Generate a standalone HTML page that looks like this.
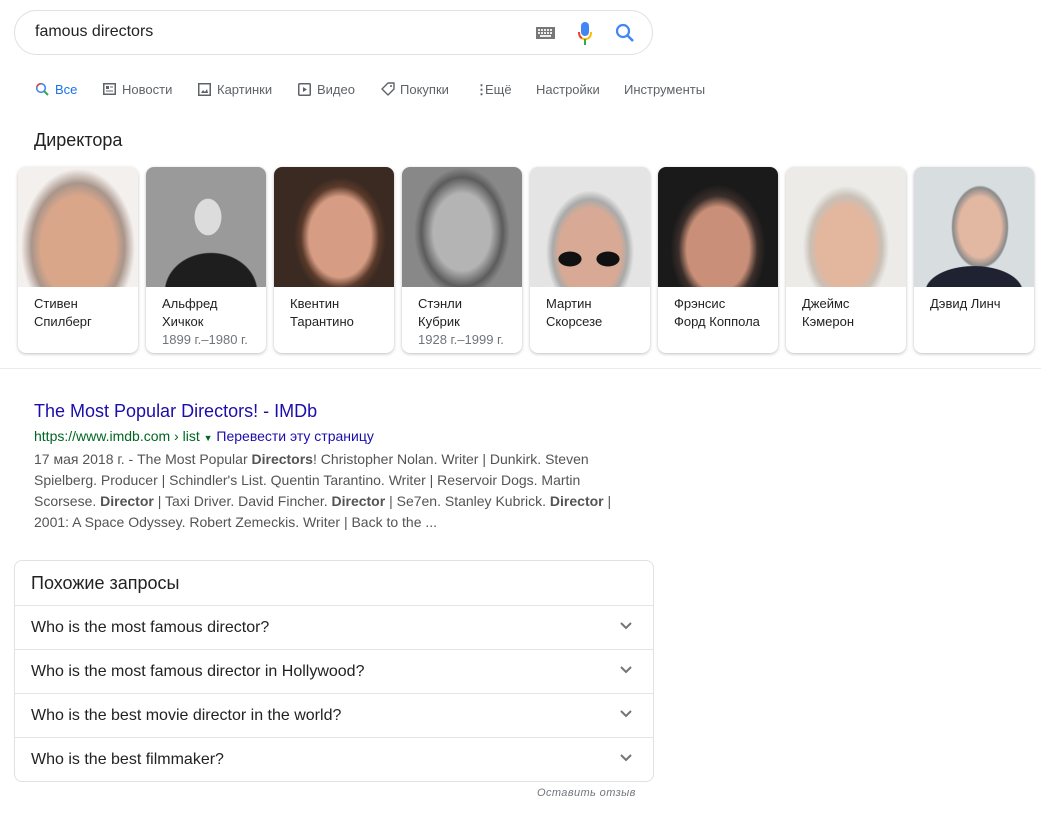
<!DOCTYPE html>
<html><head><meta charset="utf-8"><style>
*{margin:0;padding:0;box-sizing:border-box}
body{width:1041px;height:818px;background:#fff;font-family:"Liberation Sans",Arial,sans-serif;position:relative;overflow:hidden}
.a{position:absolute;white-space:nowrap}
.search{left:14px;top:10px;width:639px;height:45px;border:1px solid #dfe1e5;border-radius:24px}
.tab{top:82px;font-size:13px;color:#5f6368;line-height:15px}
.card{position:absolute;top:167px;width:120px;height:186px;border-radius:8px;box-shadow:0 1px 3px rgba(0,0,0,.25);overflow:hidden;background:#fff}
.ph{height:120px;position:relative;overflow:hidden}
.nm{position:absolute;left:16px;top:128px;font-size:13px;line-height:18px;color:#222}
.nm span{color:#70757a}
.snip{left:34px;top:449px;font-size:14px;line-height:21px;color:#545454;white-space:normal;width:590px}
.rel{left:14px;top:560px;width:640px;height:222px;border:1px solid #dfe1e5;border-radius:8px}
.row{position:absolute;left:0;width:638px;height:44px;border-top:1px solid #e4e4e4;font-size:16px;color:#222;padding-left:16px;line-height:43px}
.row svg{position:absolute;right:20px;top:15px}
</style></head><body>
<div class="a search"></div>
<div class="a" style="left:35px;top:23px;font-size:16px;color:#222">famous directors</div>
<svg class="a" style="left:536px;top:27px" width="19" height="12"><rect width="19" height="12" fill="#777"/><g fill="#eee"><rect x="2" y="2" width="2" height="2"/><rect x="5" y="2" width="2" height="2"/><rect x="8" y="2" width="2" height="2"/><rect x="11" y="2" width="2" height="2"/><rect x="14" y="2" width="2" height="2"/><rect x="2" y="5" width="2" height="2"/><rect x="5" y="5" width="2" height="2"/><rect x="8" y="5" width="2" height="2"/><rect x="11" y="5" width="2" height="2"/><rect x="14" y="5" width="2" height="2"/><rect x="4" y="8" width="11" height="2"/></g></svg>
<svg class="a" style="left:577px;top:22px" width="16" height="24"><rect x="4" y="0" width="8" height="14" rx="4" fill="#4285f4"/><path d="M2 10 Q2 17 8 17 Q14 17 14 10" stroke="#fbbc05" stroke-width="2" fill="none"/><path d="M8 17 L8 23" stroke="#34a853" stroke-width="2"/><path d="M2 10 Q2 15 5 16" stroke="#ea4335" stroke-width="2" fill="none"/></svg>
<svg class="a" style="left:615px;top:23px" width="20" height="20"><circle cx="8" cy="8" r="6" stroke="#4285f4" stroke-width="2.2" fill="none"/><path d="M12.5 12.5 L18 18" stroke="#4285f4" stroke-width="2.6"/></svg>

<svg class="a" style="left:35px;top:82px" width="14" height="14"><circle cx="6" cy="6" r="4.3" stroke="#4285f4" stroke-width="1.6" fill="none"/><path d="M9 9 L13 13" stroke="#34a853" stroke-width="2"/><path d="M2 5 A4.3 4.3 0 0 1 6 1.7" stroke="#ea4335" stroke-width="1.6" fill="none"/></svg>
<div class="a tab" style="left:55px;color:#1a73e8">Все</div>
<svg class="a" style="left:103px;top:83px" width="13" height="12"><rect x=".75" y=".75" width="11.5" height="10.5" fill="none" stroke="#5f6368" stroke-width="1.5"/><rect x="3" y="3" width="3" height="3" fill="#5f6368"/><path d="M7 4h3M3 8h7" stroke="#5f6368"/></svg>
<div class="a tab" style="left:122px">Новости</div>
<svg class="a" style="left:198px;top:83px" width="13" height="13"><rect x=".75" y=".75" width="11.5" height="11.5" fill="none" stroke="#5f6368" stroke-width="1.5"/><path d="M3 10 L5 7 L7 9 L9 6 L10 10Z" fill="#5f6368"/></svg>
<div class="a tab" style="left:217px">Картинки</div>
<svg class="a" style="left:298px;top:83px" width="13" height="13"><rect x=".75" y=".75" width="11.5" height="11.5" rx="1" fill="none" stroke="#5f6368" stroke-width="1.5"/><path d="M5 4 L9 6.5 L5 9Z" fill="#5f6368"/></svg>
<div class="a tab" style="left:317px">Видео</div>
<svg class="a" style="left:381px;top:82px" width="14" height="14"><path d="M1 7 L7 1 L13 1 L13 7 L7 13Z" fill="none" stroke="#5f6368" stroke-width="1.4" stroke-linejoin="round"/><circle cx="10" cy="4" r="1" fill="#5f6368"/></svg>
<div class="a tab" style="left:400px">Покупки</div>
<div class="a tab" style="left:475px;font-weight:bold">⋮</div>
<div class="a tab" style="left:485px">Ещё</div>
<div class="a tab" style="left:536px">Настройки</div>
<div class="a tab" style="left:624px">Инструменты</div>

<div class="a" style="left:34px;top:130px;font-size:18px;color:#222">Директора</div>

<div class="card" style="left:18px"><div class="ph" style="background:radial-gradient(ellipse 62px 85px at 60px 80px,#d9a68a 0 60%,#a9958a 75%,#f4f0ee 92%)"></div><div class="nm">Стивен<br>Спилберг</div></div>
<div class="card" style="left:146px"><div class="ph" style="background:radial-gradient(ellipse 22px 30px at 62px 50px,#dcdcdc 60%,transparent 62%),radial-gradient(ellipse 65px 55px at 65px 125px,#1e1e1e 70%,transparent 72%),#9a9a9a"></div><div class="nm">Альфред<br>Хичкок<br><span>1899 г.–1980 г.</span></div></div>
<div class="card" style="left:274px"><div class="ph" style="background:radial-gradient(ellipse 50px 65px at 66px 70px,#d79c84 62%,#5a3a2a 78%,#3a2a22 92%)"></div><div class="nm">Квентин<br>Тарантино</div></div>
<div class="card" style="left:402px"><div class="ph" style="background:radial-gradient(ellipse 52px 70px at 60px 65px,#b4b4b4 55%,#5c5c5c 78%,#888 92%)"></div><div class="nm">Стэнли<br>Кубрик<br><span>1928 г.–1999 г.</span></div></div>
<div class="card" style="left:530px"><div class="ph" style="background:radial-gradient(ellipse 14px 9px at 40px 92px,#111 80%,transparent 85%),radial-gradient(ellipse 14px 9px at 78px 92px,#111 80%,transparent 85%),radial-gradient(ellipse 50px 70px at 60px 85px,#d8aa95 62%,#aaa 75%,#e4e4e4 88%)"></div><div class="nm">Мартин<br>Скорсезе</div></div>
<div class="card" style="left:658px"><div class="ph" style="background:radial-gradient(ellipse 52px 70px at 60px 82px,#c98f78 60%,#3a2e2a 76%,#1a1a1a 92%)"></div><div class="nm">Фрэнсис<br>Форд Коппола</div></div>
<div class="card" style="left:786px"><div class="ph" style="background:radial-gradient(ellipse 48px 68px at 60px 80px,#e3b69e 60%,#c9c0b6 75%,#ecebe8 90%)"></div><div class="nm">Джеймс<br>Кэмерон</div></div>
<div class="card" style="left:914px"><div class="ph" style="background:radial-gradient(ellipse 60px 32px at 60px 125px,#1f2230 80%,transparent 82%),radial-gradient(ellipse 38px 55px at 66px 60px,#e2b8a2 55%,#8a8a8a 72%,transparent 76%),#d8dde0"></div><div class="nm">Дэвид Линч</div></div>

<div class="a" style="left:0;top:368px;width:1041px;height:1px;background:#ebebeb"></div>

<div class="a" style="left:34px;top:401px;font-size:18px;color:#1a0dab">The Most Popular Directors! - IMDb</div>
<div class="a" style="left:34px;top:428px;font-size:14px;color:#006621">https://www.imdb.com › list <span style="font-size:9px">▼</span> <span style="color:#1a0dab">Перевести эту страницу</span></div>
<div class="a snip">17 мая 2018 г. - The Most Popular <b>Directors</b>! Christopher Nolan. Writer | Dunkirk. Steven Spielberg. Producer | Schindler's List. Quentin Tarantino. Writer | Reservoir Dogs. Martin Scorsese. <b>Director</b> | Taxi Driver. David Fincher. <b>Director</b> | Se7en. Stanley Kubrick. <b>Director</b> | 2001: A Space Odyssey. Robert Zemeckis. Writer | Back to the ...</div>

<div class="a rel">
<div class="a" style="left:16px;top:12px;font-size:18px;color:#222">Похожие запросы</div>
<div class="row" style="top:44px">Who is the most famous director?<svg width="14" height="10"><path d="M2 2 L7 7 L12 2" stroke="#70757a" stroke-width="2" fill="none"/></svg></div>
<div class="row" style="top:88px">Who is the most famous director in Hollywood?<svg width="14" height="10"><path d="M2 2 L7 7 L12 2" stroke="#70757a" stroke-width="2" fill="none"/></svg></div>
<div class="row" style="top:132px">Who is the best movie director in the world?<svg width="14" height="10"><path d="M2 2 L7 7 L12 2" stroke="#70757a" stroke-width="2" fill="none"/></svg></div>
<div class="row" style="top:176px">Who is the best filmmaker?<svg width="14" height="10"><path d="M2 2 L7 7 L12 2" stroke="#70757a" stroke-width="2" fill="none"/></svg></div>
</div>
<div class="a" style="left:537px;top:787px;font-size:11px;font-style:italic;color:#70757a;letter-spacing:.4px">Оставить отзыв</div>
</body></html>
